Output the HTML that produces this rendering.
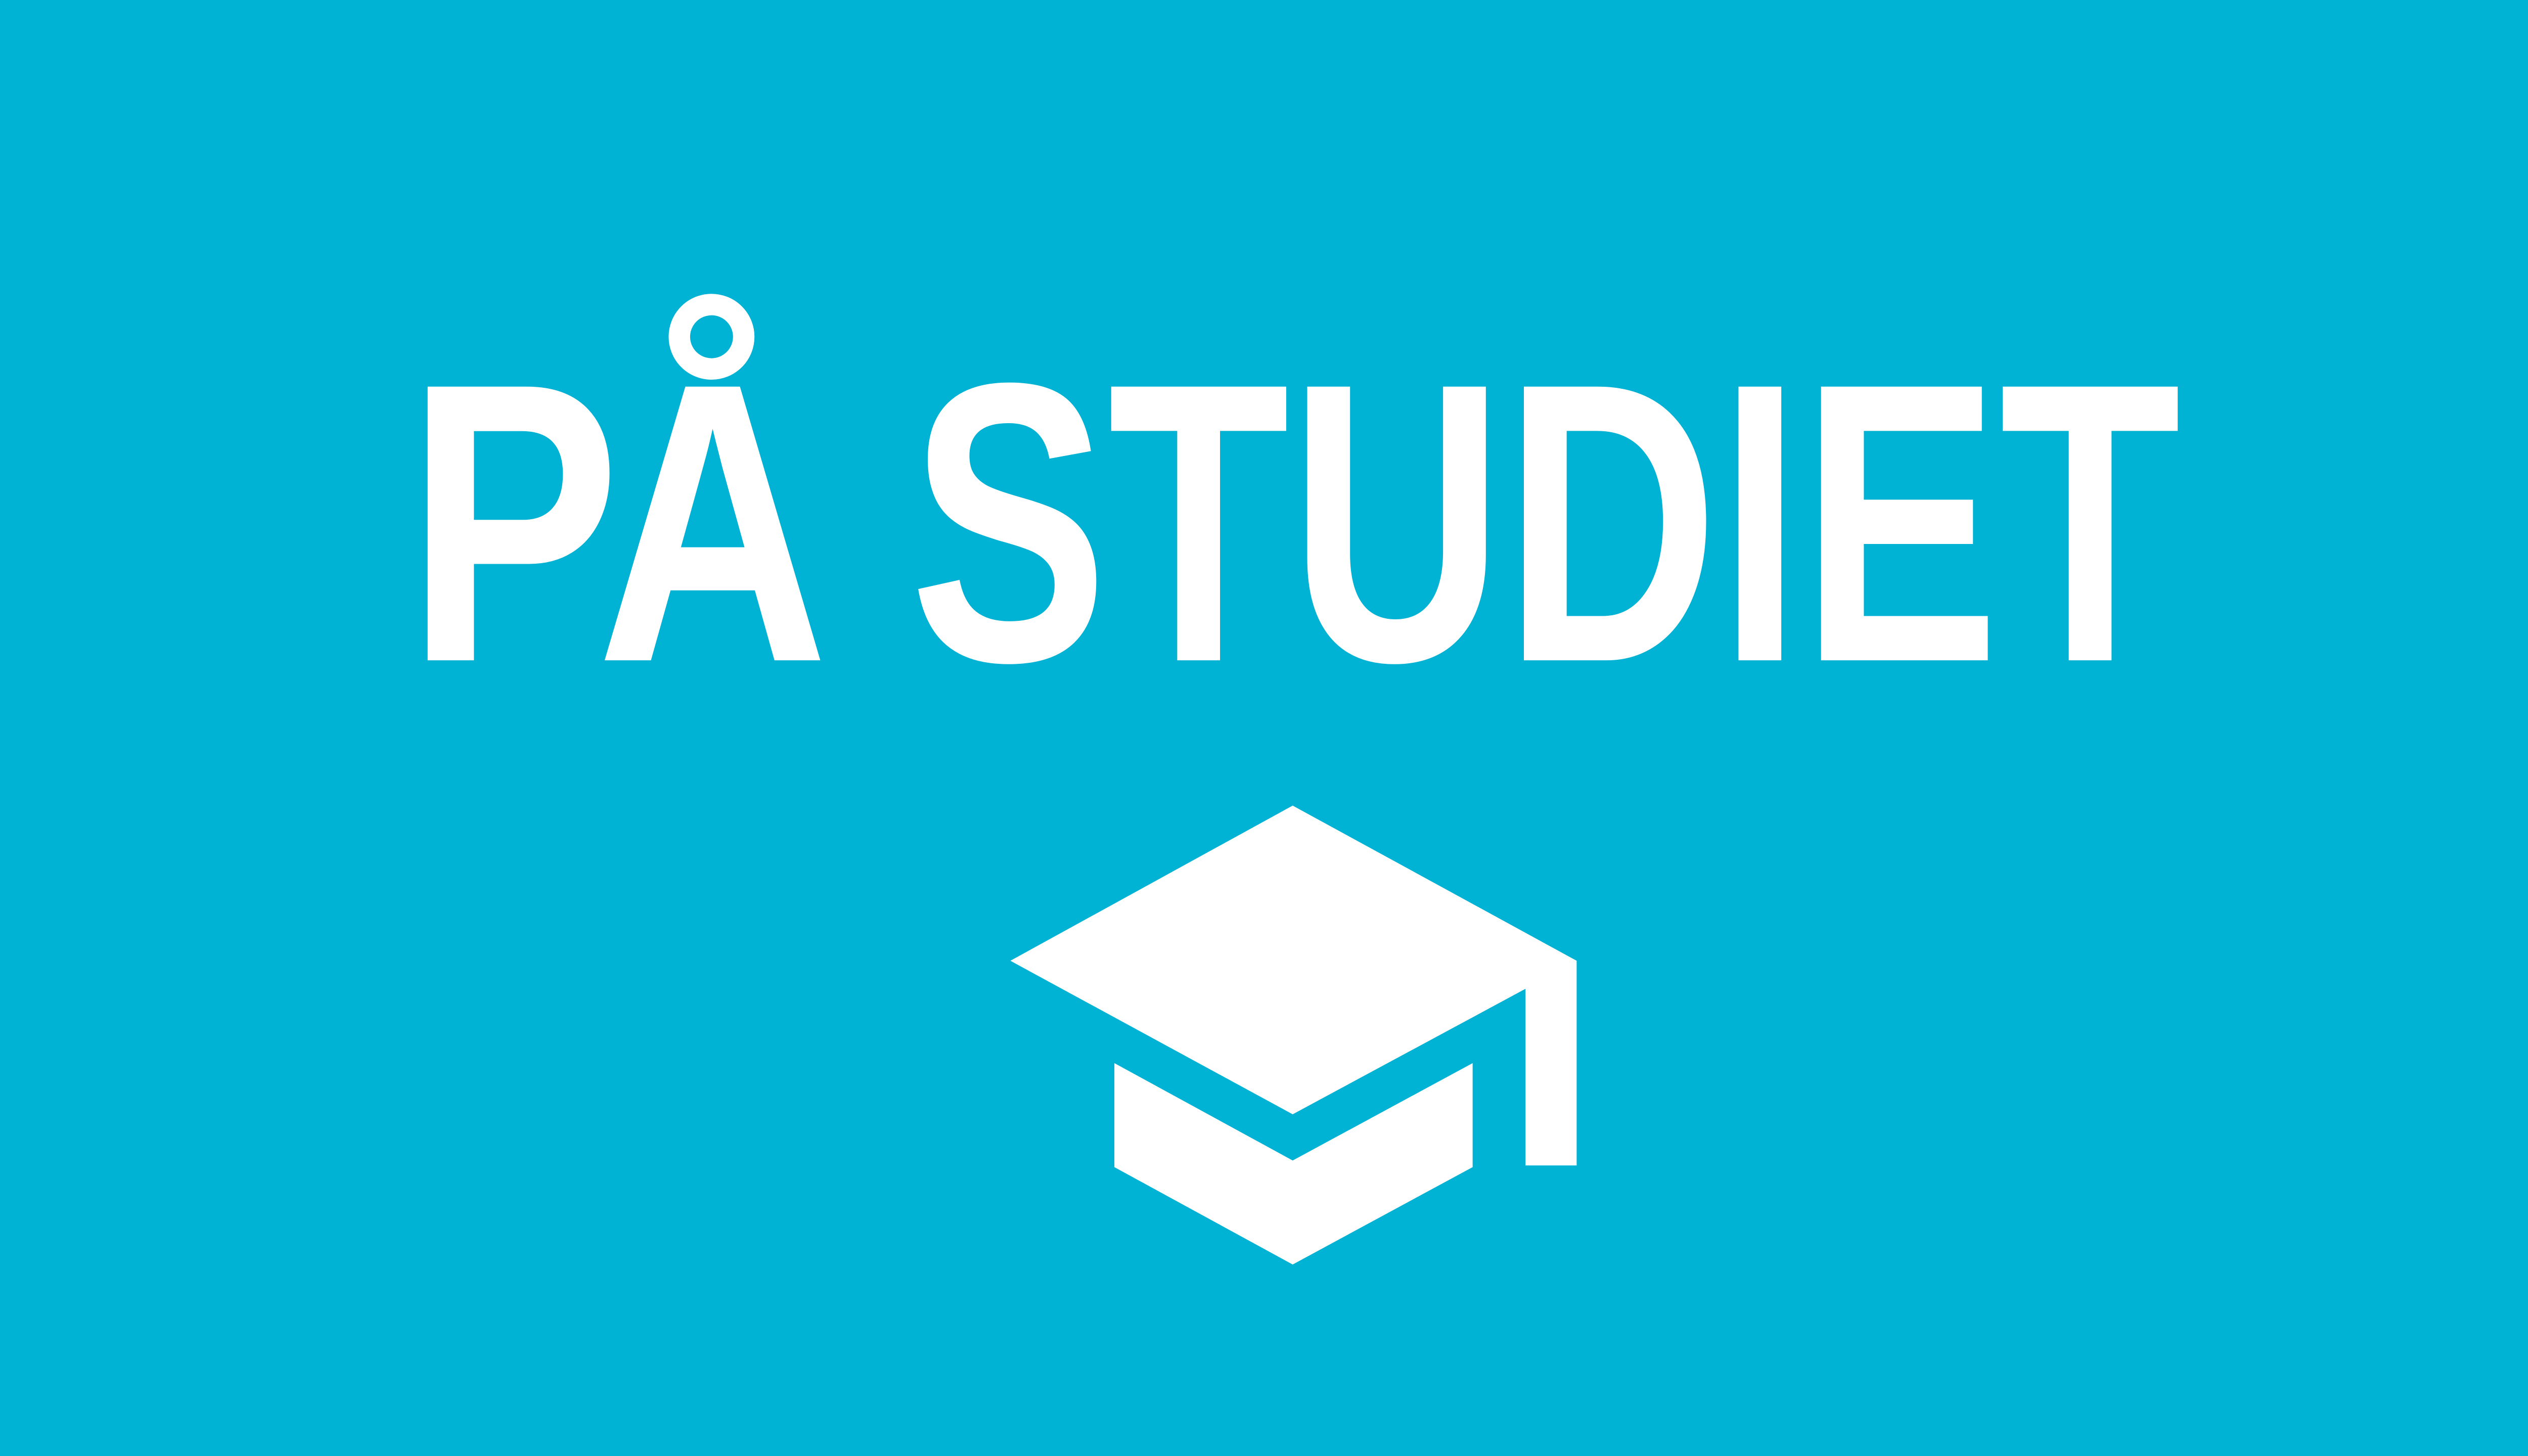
<!DOCTYPE html>
<html><head><meta charset="utf-8"><style>
html,body{margin:0;padding:0;background:#00B2D4;}
svg{display:block}
</style></head><body>
<svg width="5120" height="2880" viewBox="0 0 1568 882" xmlns="http://www.w3.org/2000/svg">
<rect width="1568" height="882" fill="#00B2D4"/>
<g fill="#fff" font-family="Liberation Sans, sans-serif" font-weight="bold" font-size="241">
<text x="246" y="400" textLength="256" lengthAdjust="spacingAndGlyphs">PA</text>
<text x="551" y="400" textLength="770" lengthAdjust="spacingAndGlyphs">STUDIET</text>
</g>
<circle cx="431" cy="204" r="19.5" fill="none" stroke="#fff" stroke-width="13"/>
<polygon fill="#fff" points="783,488 612,582 783,675 924,599 924,706 955,706 955,582"/>
<polygon fill="#fff" points="675,644 783,703 892,644 892,707 783,766 675,707"/>
</svg>
</body></html>
